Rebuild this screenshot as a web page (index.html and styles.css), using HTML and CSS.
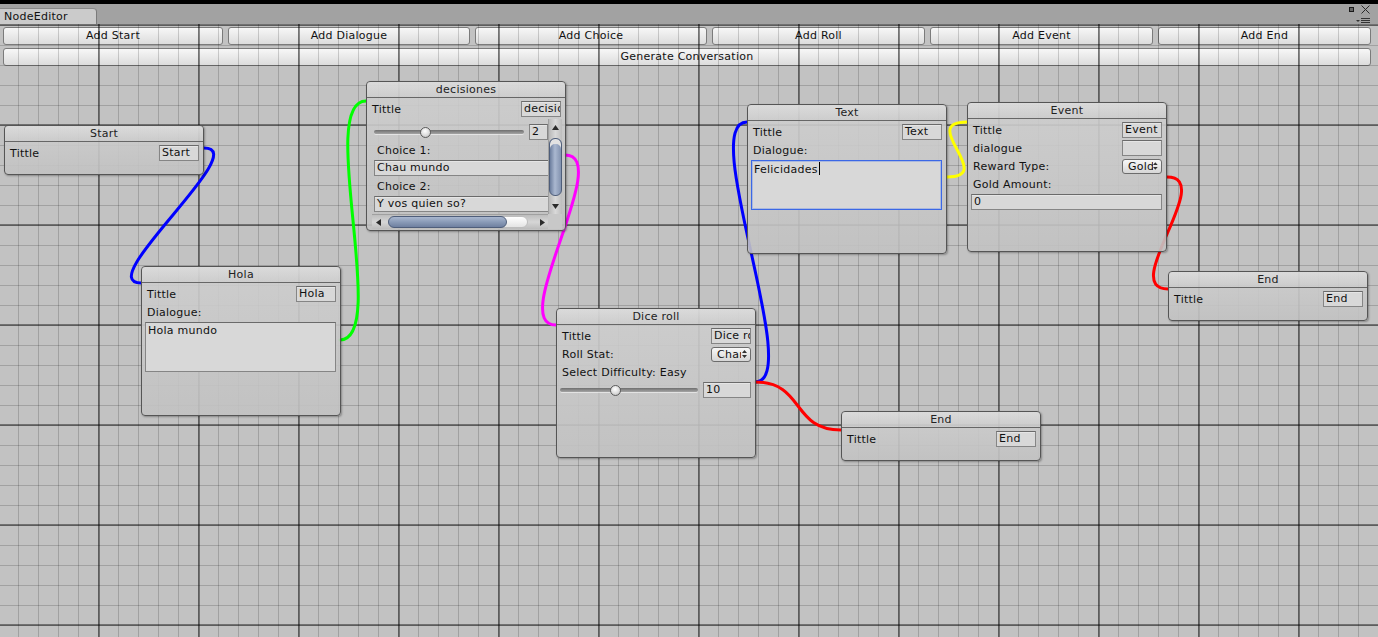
FILE: index.html
```html
<!DOCTYPE html>
<html lang="es">
<head>
<meta charset="utf-8">
<title>NodeEditor</title>
<link rel="stylesheet" href="styles.css">
</head>
<body>
<div class="window">
  <div class="titlebar"></div>
  <div class="tabstrip">
    <div class="tab">NodeEditor</div>
    <div class="win-icons">
      <div class="win-icons-top">
        <svg class="ico-max" width="5" height="5" viewBox="0 0 5 5"><rect x="0.5" y="0.5" width="4" height="4" fill="#666" stroke="#1a1a1a" stroke-width="1"/></svg>
        <svg class="ico-close" width="9" height="9" viewBox="0 0 9 9"><path d="M0.5 0.5 L8.5 8.5 M8.5 0.5 L0.5 8.5" stroke="#2a2a2a" stroke-width="1" fill="none"/></svg>
      </div>
      <svg class="ico-menu" width="14" height="6" viewBox="0 0 14 6"><path d="M0 2 L4 2 L2 4 Z" fill="#333"/><path d="M5 0.5 H14 M5 2.5 H14 M5 4.5 H14" stroke="#333" stroke-width="1" fill="none"/></svg>
    </div>
  </div>

  <div class="canvas">
    <div class="toolbar">
      <div class="btn-row">
        <button class="tbtn">Add Start</button>
        <button class="tbtn">Add Dialogue</button>
        <button class="tbtn">Add Choice</button>
        <button class="tbtn">Add Roll</button>
        <button class="tbtn">Add Event</button>
        <button class="tbtn">Add End</button>
      </div>
      <button class="tbtn tbtn-wide">Generate Conversation</button>
    </div>

    <div class="grid"></div>

    <svg class="wires" width="1378" height="613" viewBox="0 0 1378 613">
      <path d="M204 124 C254 124 91 259 141 259" stroke="#0000ff"/>
      <path d="M340 316 C390 316 316 77 366 77" stroke="#00ff00"/>
      <path d="M565 131 C615 131 506 301 556 301" stroke="#ff00ff"/>
      <path d="M755 358 C805 358 697 98 747 98" stroke="#0000ff"/>
      <path d="M755 358 C805 358 791 406 841 406" stroke="#ff0000"/>
      <path d="M947 153 C997 153 917 98 967 98" stroke="#ffff00"/>
      <path d="M1167 153 C1217 153 1118 265 1168 265" stroke="#ff0000"/>
    </svg>

    <div class="node node-short n-start">
      <div class="node-head">Start</div>
      <div class="node-body">
        <div class="row"><span class="lbl">Tittle</span><span class="field">Start</span></div>
      </div>
    </div>

    <div class="node node-tall n-hola">
      <div class="node-head">Hola</div>
      <div class="node-body">
        <div class="row"><span class="lbl">Tittle</span><span class="field">Hola</span></div>
        <div class="row"><span class="lbl">Dialogue:</span></div>
        <div class="textarea">Hola mundo</div>
      </div>
    </div>

    <div class="node node-tall n-dec">
      <div class="node-head">decisiones</div>
      <div class="node-body">
        <div class="row"><span class="lbl">Tittle</span><span class="field">decisiones</span></div>
        <div class="scroll">
          <div class="scroll-content">
            <div class="row row-slider">
              <div class="slider slider-dec"><div class="slider-track"></div><div class="slider-thumb thumb-dec"></div></div>
              <span class="field field-num">2</span>
            </div>
            <div class="row"><span class="lbl lbl-choice">Choice 1:</span></div>
            <div class="row"><span class="field field-choice">Chau mundo</span></div>
            <div class="row"><span class="lbl lbl-choice">Choice 2:</span></div>
            <div class="row"><span class="field field-choice">Y vos quien so?</span></div>
          </div>
          <div class="vscroll">
            <div class="vs-arrow"><svg width="7" height="5" viewBox="0 0 7 5"><path d="M3.5 0 L7 5 L0 5 Z" fill="#2b2b2b"/></svg></div>
            <div class="vs-track"><div class="vs-thumb"></div></div>
            <div class="vs-arrow"><svg width="7" height="5" viewBox="0 0 7 5"><path d="M0 0 L7 0 L3.5 5 Z" fill="#2b2b2b"/></svg></div>
          </div>
          <div class="hscroll">
            <div class="hs-arrow"><svg width="5" height="7" viewBox="0 0 5 7"><path d="M5 0 L5 7 L0 3.5 Z" fill="#2b2b2b"/></svg></div>
            <div class="hs-track"><div class="hs-rail"><div class="hs-thumb"></div></div></div>
            <div class="hs-arrow"><svg width="5" height="7" viewBox="0 0 5 7"><path d="M0 0 L5 3.5 L0 7 Z" fill="#2b2b2b"/></svg></div>
          </div>
          <div class="scroll-corner"></div>
        </div>
      </div>
    </div>

    <div class="node node-tall n-dice">
      <div class="node-head">Dice roll</div>
      <div class="node-body">
        <div class="row"><span class="lbl">Tittle</span><span class="field">Dice roll</span></div>
        <div class="row"><span class="lbl">Roll Stat:</span>
          <span class="popup"><span class="popup-text">Char</span><svg width="5" height="8" viewBox="0 0 5 8"><path d="M2.5 0 L5 3 L0 3 Z M0 5 L5 5 L2.5 8 Z" fill="#333"/></svg></span>
        </div>
        <div class="row"><span class="lbl">Select Difficulty: Easy</span></div>
        <div class="row row-slider">
          <div class="slider slider-dice"><div class="slider-track"></div><div class="slider-thumb thumb-dice"></div></div>
          <span class="field field-ten">10</span>
        </div>
      </div>
    </div>

    <div class="node node-tall n-text">
      <div class="node-head">Text</div>
      <div class="node-body">
        <div class="row"><span class="lbl">Tittle</span><span class="field">Text</span></div>
        <div class="row"><span class="lbl">Dialogue:</span></div>
        <div class="textarea textarea-focus">Felicidades<span class="caret"></span></div>
      </div>
    </div>

    <div class="node node-tall n-event">
      <div class="node-head">Event</div>
      <div class="node-body">
        <div class="row"><span class="lbl">Tittle</span><span class="field">Event</span></div>
        <div class="row"><span class="lbl">dialogue</span><span class="field"></span></div>
        <div class="row"><span class="lbl">Reward Type:</span>
          <span class="popup"><span class="popup-text popup-text-gold">Gold</span><svg width="5" height="8" viewBox="0 0 5 8"><path d="M2.5 0 L5 3 L0 3 Z M0 5 L5 5 L2.5 8 Z" fill="#333"/></svg></span>
        </div>
        <div class="row"><span class="lbl">Gold Amount:</span></div>
        <div class="row"><span class="field field-full">0</span></div>
      </div>
    </div>

    <div class="node node-short n-end1">
      <div class="node-head">End</div>
      <div class="node-body">
        <div class="row"><span class="lbl">Tittle</span><span class="field">End</span></div>
      </div>
    </div>

    <div class="node node-short n-end2">
      <div class="node-head">End</div>
      <div class="node-body">
        <div class="row"><span class="lbl">Tittle</span><span class="field">End</span></div>
      </div>
    </div>
  </div>
</div>
</body>
</html>
```

FILE: styles.css
```css
* { box-sizing: border-box; }

body {
  margin: 0;
  width: 1378px;
  height: 637px;
  overflow: hidden;
  font-family: "DejaVu Sans", Verdana, sans-serif;
  font-size: 11px;
  letter-spacing: 0.25px;
  color: #111;
  background: #c2c2c2;
}

.window {
  display: flex;
  flex-direction: column;
  height: 637px;
}

.titlebar {
  height: 4px;
  background: #000;
}

.tabstrip {
  height: 20px;
  background: #a2a2a2;
  display: flex;
  justify-content: space-between;
  align-items: flex-end;
}

.tab {
  width: 97px;
  height: 16px;
  padding-left: 4px;
  line-height: 16px;
  background: #cbcbcb;
  border-right: 1px solid #7a7a7a;
  border-top: 1px solid #8a8a8a;
  border-top-right-radius: 4px;
  color: #111;
}

.win-icons {
  align-self: stretch;
  display: flex;
  flex-direction: column;
  align-items: flex-end;
  padding: 1px 8px 0 0;
}

.win-icons-top {
  display: flex;
  align-items: center;
  gap: 7px;
  height: 9px;
}

.ico-menu {
  margin-top: 4px;
}

.canvas {
  position: relative;
  flex: 1;
  background: #c2c2c2;
  overflow: hidden;
}

.toolbar {
  position: relative;
  z-index: 0;
  padding: 3px 7px 0 3px;
  display: flex;
  flex-direction: column;
  gap: 3px;
}

.btn-row {
  display: flex;
  gap: 5px;
}

.tbtn {
  height: 18px;
  padding: 0;
  border: 1px solid #7b7b7b;
  border-radius: 3px;
  background: linear-gradient(#f7f7f7, #dcdcdc);
  font: inherit;
  letter-spacing: inherit;
  color: #111;
  line-height: 16px;
  text-align: center;
}

.btn-row .tbtn:nth-child(1) { width: 220px; }
.btn-row .tbtn:nth-child(2) { width: 242px; }
.btn-row .tbtn:nth-child(3) { width: 232px; }
.btn-row .tbtn:nth-child(4) { width: 213px; }
.btn-row .tbtn:nth-child(5) { width: 223px; }
.btn-row .tbtn:nth-child(6) { width: 213px; }

.tbtn-wide { width: 100%; }

.grid {
  position: absolute;
  inset: 0;
  z-index: 1;
  pointer-events: none;
  background-image:
    linear-gradient(to right, rgba(0, 0, 0, 0.42) 2px, transparent 2px),
    linear-gradient(to bottom, rgba(0, 0, 0, 0.42) 2px, transparent 2px),
    linear-gradient(to right, rgba(0, 0, 0, 0.17) 1px, transparent 1px),
    linear-gradient(to bottom, rgba(0, 0, 0, 0.17) 1px, transparent 1px);
  background-size: 100px 100%, 100% 100px, 20px 100%, 100% 20px;
  background-position: 98px 0, 0 0, 18px 0, 0 1px;
}

.wires {
  position: absolute;
  left: 0;
  top: 0;
  z-index: 2;
}

.wires path {
  fill: none;
  stroke-width: 3;
  stroke-linecap: round;
}

.node {
  position: absolute;
  z-index: 3;
  width: 200px;
  border: 1px solid #555;
  border-radius: 4px;
  background: linear-gradient(rgba(206, 206, 206, 0.9), rgba(194, 194, 194, 0.9));
  box-shadow: 1px 1px 2px rgba(0, 0, 0, 0.3);
  overflow: hidden;
}

.node-tall { height: 150px; }
.node-short { height: 50px; }

.n-start { left: 4px;    top: 101px; }
.n-hola  { left: 141px;  top: 242px; }
.n-dec   { left: 366px;  top: 57px; }
.n-dice  { left: 556px;  top: 284px; }
.n-text  { left: 747px;  top: 80px; }
.n-event { left: 967px;  top: 78px; }
.n-end1  { left: 1168px; top: 247px; }
.n-end2  { left: 841px;  top: 387px; }

.node-head {
  height: 16px;
  border-bottom: 1px solid #666;
  text-align: center;
  line-height: 15px;
  color: #222;
  background: linear-gradient(rgba(235, 235, 235, 0.45), rgba(210, 210, 210, 0.2));
}

.node-body {
  padding: 3px 4px 0 3px;
  display: flex;
  flex-direction: column;
  gap: 2px;
}

.row {
  display: flex;
  align-items: center;
  justify-content: space-between;
  height: 16px;
}

.lbl {
  padding-left: 2px;
  white-space: nowrap;
}

.field {
  width: 40px;
  height: 16px;
  border: 1px solid #858585;
  border-top-color: #6a6a6a;
  background: #d8d8d8;
  padding: 0 2px;
  line-height: 14px;
  white-space: nowrap;
  overflow: hidden;
  box-shadow: inset 0 1px 0 rgba(255, 255, 255, 0.35);
}

.field-full { width: 100%; }

.textarea {
  height: 50px;
  border: 1px solid #858585;
  border-top-color: #6a6a6a;
  background: #d8d8d8;
  padding: 1px 2px;
  line-height: 14px;
}

.textarea-focus {
  border: 1px solid #3b68e6;
  box-shadow: inset 0 0 0 1px rgba(90, 130, 235, 0.35);
}

.caret {
  display: inline-block;
  width: 1px;
  height: 13px;
  margin-left: 1px;
  vertical-align: -2px;
  background: #000;
}

.popup {
  width: 40px;
  height: 15px;
  border: 1px solid #6c6c6c;
  border-radius: 3px;
  background: linear-gradient(#f8f8f8, #d6d6d6);
  display: flex;
  align-items: center;
  justify-content: space-between;
  padding: 0 3px 0 5px;
}

.popup-text {
  width: 24px;
  overflow: hidden;
  white-space: nowrap;
  line-height: 13px;
}

.popup-text-gold { width: 27px; }

.row-slider { gap: 5px; }

.slider {
  position: relative;
  height: 16px;
  display: flex;
  align-items: center;
}

.slider-dec { width: 150px; }
.slider-dice { flex: 1; }

.slider-track {
  width: 100%;
  height: 4px;
  border-radius: 2px;
  background: linear-gradient(#6f6f6f, #a5a5a5);
  box-shadow: 0 1px 0 rgba(255, 255, 255, 0.5);
}

.slider-thumb {
  position: absolute;
  top: 3px;
  width: 11px;
  height: 11px;
  border-radius: 50%;
  border: 1px solid #5c5c5c;
  background: radial-gradient(circle at 45% 35%, #ffffff, #d8d8d8 60%, #b0b0b0);
}

.thumb-dec { left: 46px; }
.thumb-dice { left: 50px; }

.field-num { width: 19px; }
.field-ten { width: 48px; }

.scroll {
  margin-left: 2px;
  width: 190px;
  height: 110px;
  display: grid;
  grid-template-columns: 176px 14px;
  grid-template-rows: 95px 15px;
}

.scroll-content {
  overflow: hidden;
  padding: 5px 0 0 2px;
  display: flex;
  flex-direction: column;
  gap: 2px;
}

.lbl-choice { padding-left: 3px; }

.field-choice {
  width: 180px;
  flex: none;
}

.vscroll {
  display: flex;
  flex-direction: column;
  background: linear-gradient(to right, #b9b9b9, #d9d9d9 50%, #bdbdbd);
  border-left: 1px solid #a0a0a0;
}

.vs-arrow {
  height: 16px;
  display: flex;
  align-items: center;
  justify-content: center;
}

.vs-track {
  flex: 1;
  padding-top: 3px;
}

.vs-thumb {
  height: 58px;
  border: 1px solid #4f5e7a;
  border-radius: 6px;
  background: linear-gradient(to right, #6c7e9e, #aab8d0 45%, #8292af);
  box-shadow: inset 0 5px 0 #e2e2e2;
}

.hscroll {
  display: flex;
  align-items: center;
  background: linear-gradient(#bdbdbd, #d6d6d6 50%, #bcbcbc);
  border-top: 1px solid #a0a0a0;
}

.hs-arrow {
  width: 12px;
  height: 100%;
  display: flex;
  align-items: center;
  justify-content: center;
}

.hs-track {
  flex: 1;
  height: 100%;
  display: flex;
  align-items: center;
  padding-left: 4px;
}

.hs-rail {
  width: 140px;
  height: 12px;
  border-radius: 6px;
  background: linear-gradient(#ffffff, #e4e4e4);
  border: 1px solid #bdbdbd;
  display: flex;
}

.hs-thumb {
  width: 119px;
  height: 12px;
  margin: -1px 0 0 -1px;
  border: 1px solid #4f5e7a;
  border-radius: 6px;
  background: linear-gradient(#a9b7cf, #8798b5 55%, #6f80a0);
}

.scroll-corner {
  background: #c8c8c8;
}
```
